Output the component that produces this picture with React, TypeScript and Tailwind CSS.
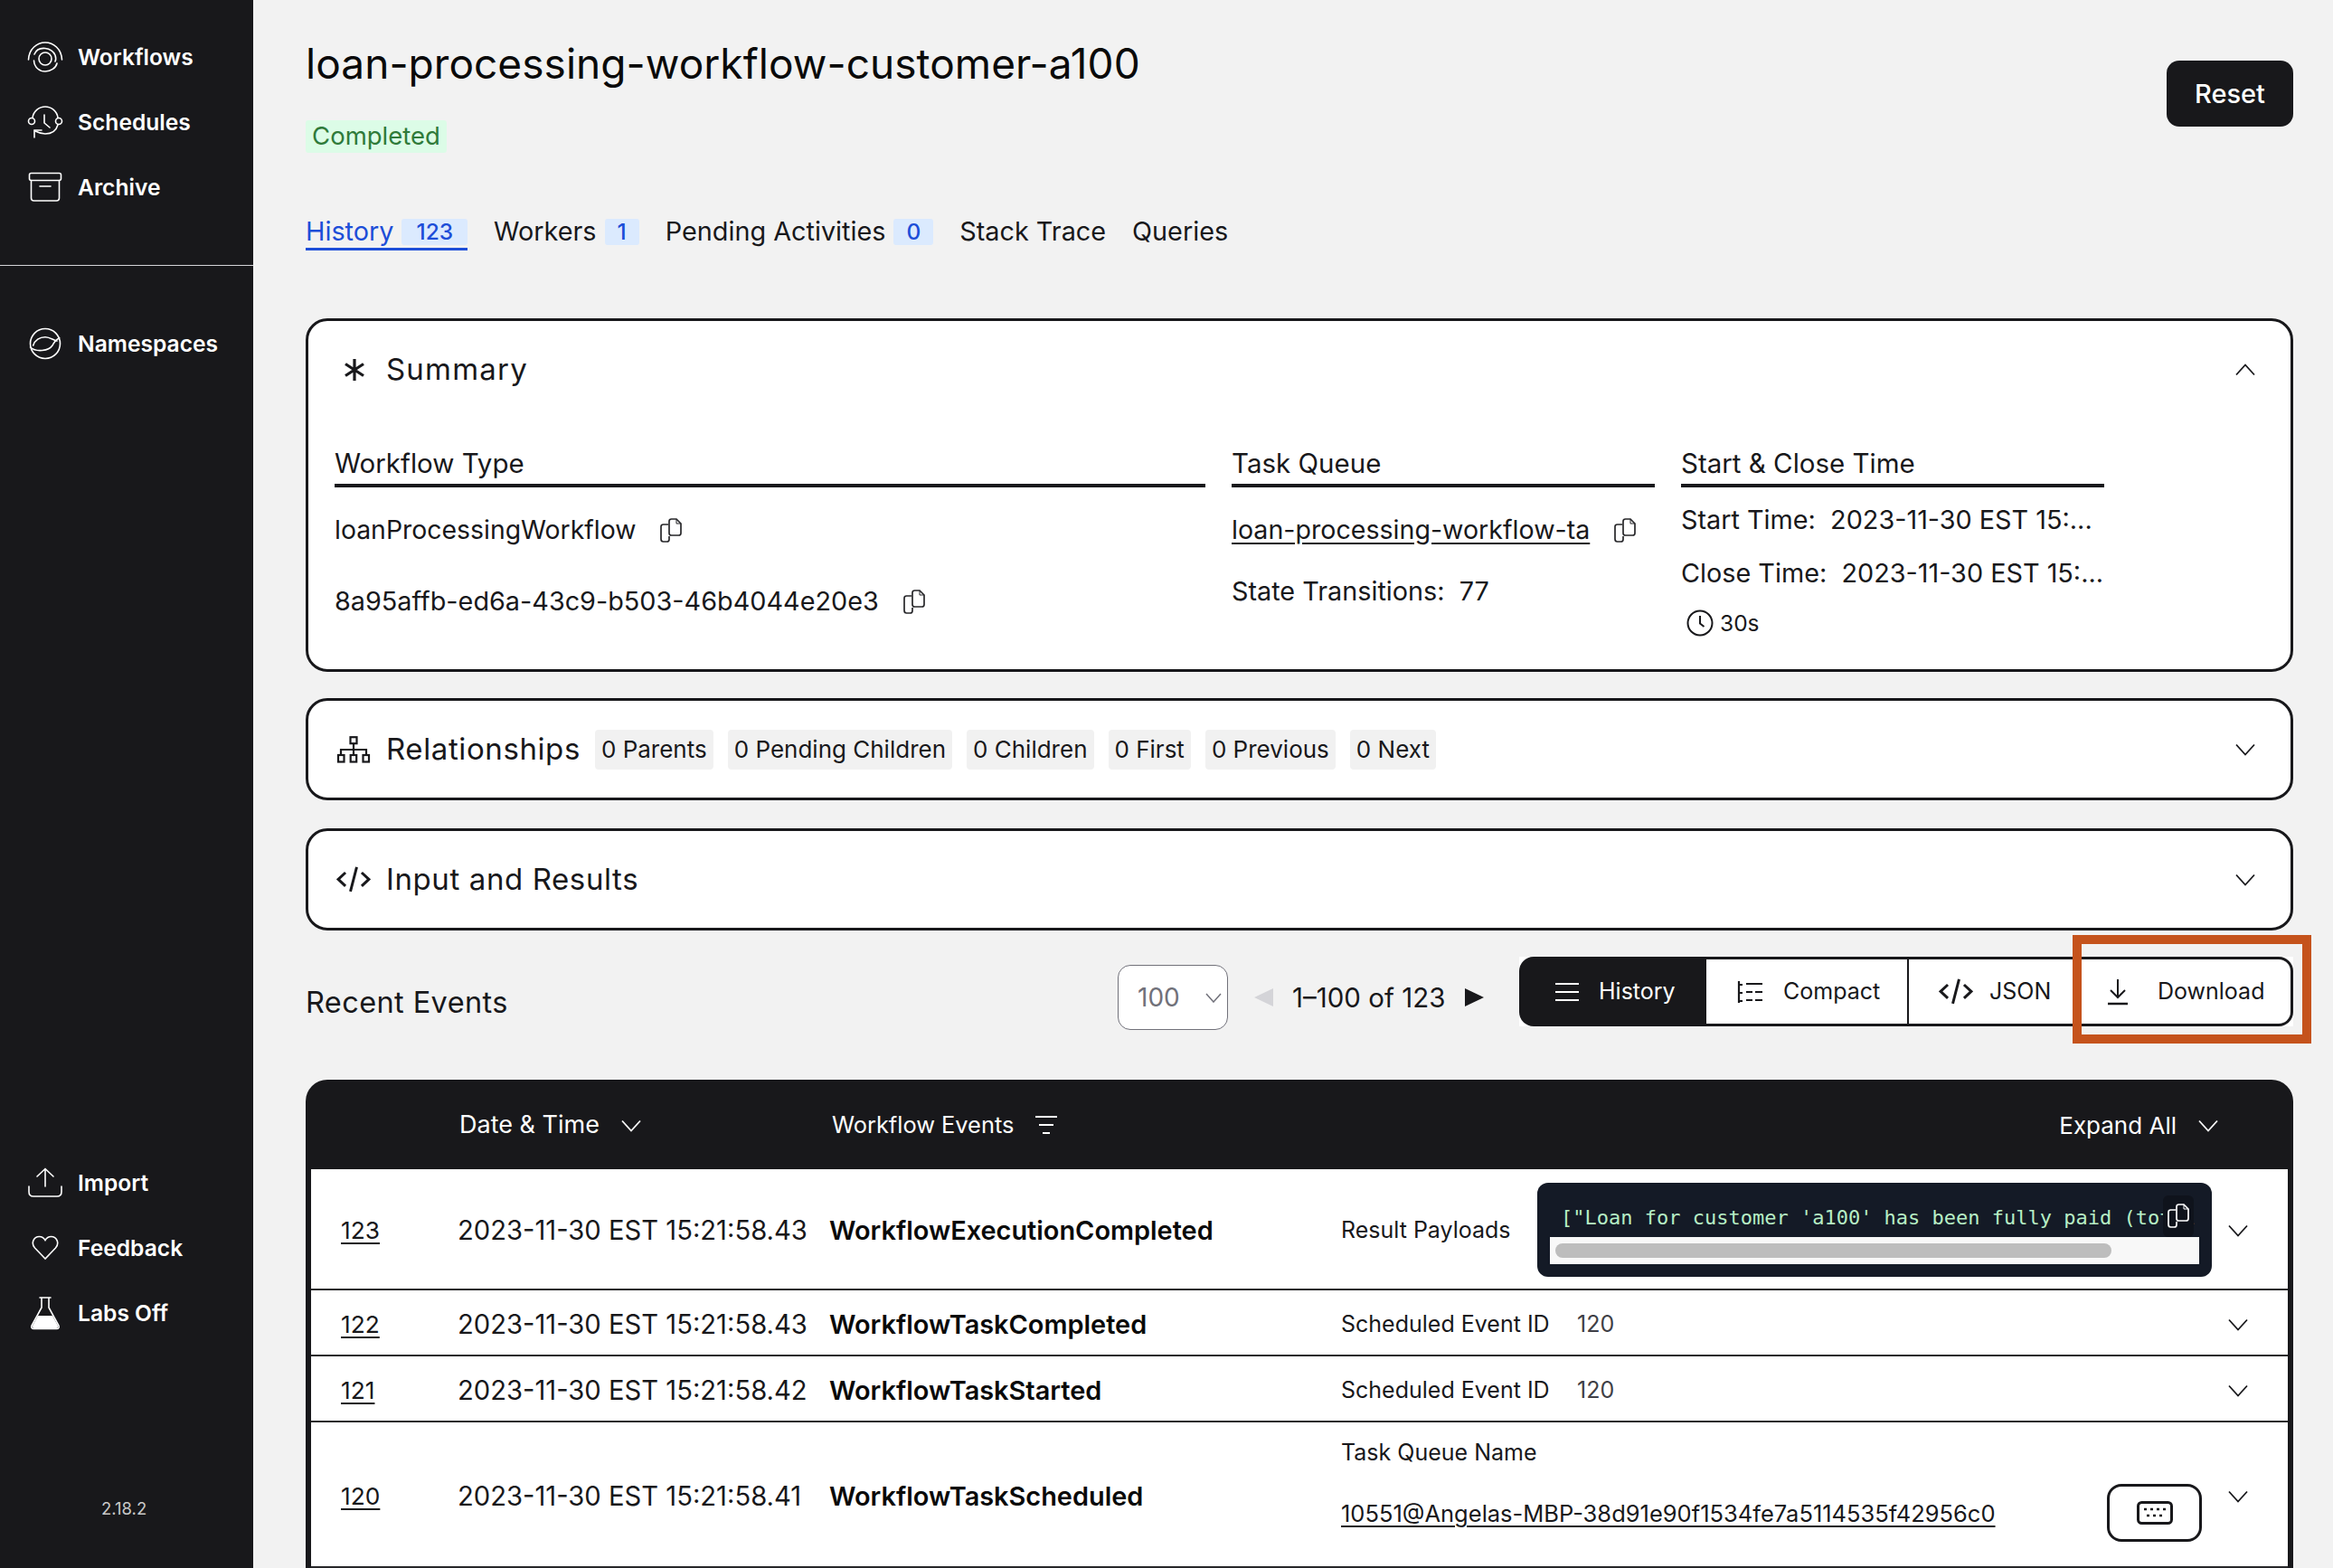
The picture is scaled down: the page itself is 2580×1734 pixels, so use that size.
import React from "react";

const F = "font-['Inter',sans-serif]";

const Chev = ({ up = false, cls = "text-[#18181b]" }: { up?: boolean; cls?: string }) => (
  <svg width="24" height="14" viewBox="0 0 24 14" fill="none" className={cls + " shrink-0"}>
    <path d={up ? "M2 12.5 12 1.5l10 11" : "M2 1.5 12 12.5 22 1.5"} stroke="currentColor" strokeWidth="1.8" />
  </svg>
);

const Copy = ({ cls = "text-[#27272a]" }: { cls?: string }) => (
  <svg width="28" height="29" viewBox="0 0 28 29" fill="none" className={cls + " shrink-0"} stroke="currentColor" strokeWidth="1.7">
    <path d="M11 8H5.500Q3 8 3 10.500V24Q3 27 5.500 27H9.500Q12 27 12 24.500V21" />
    <path d="M12 4.500Q12 2 14.500 2H20L25 7V17.500Q25 20 22.500 20H14.500Q12 20 12 17.500Z" />
    <path d="M20 2V7H25" strokeWidth="1" />
  </svg>
);

const Code = ({ w = 38 }: { w?: number }) => (
  <svg width={w} height={w * 0.76} viewBox="0 0 38 29" fill="none" stroke="#18181b" strokeWidth="3" className="shrink-0">
    <path d="M10 7 2 14.500 10 22M28 7 36 14.500 28 22M22.500 1 15.500 28" />
  </svg>
);

const Nav = ({ icon, label }: { icon: React.ReactNode; label: string }) => (
  <div className="flex h-[72px] items-center">
    <div className="flex w-[86px] shrink-0 justify-center pl-[14px]">{icon}</div>
    <span className="text-[24.6px] font-semibold text-white">{label}</span>
  </div>
);

const s = { fill: "none", stroke: "#fff", strokeWidth: 1.6, strokeLinecap: "round" as const };

const WorkflowsIcon = () => (
  <svg width="40" height="36" viewBox="0 0 40 36">
    <path {...s} d="M1.500 21C2 9 11 2 20 2s18 7 18.500 19" />
    <path {...s} d="M8 15C10 10 15 8 20 8.500c5 .5 9 3 11 7.500 1 3 1 5 0 7" />
    <path {...s} d="M7.500 22C8 30 14 34 20 34s12-4 13-9" />
    <circle {...s} cx="20" cy="20" r="7" />
  </svg>
);
const SchedulesIcon = () => (
  <svg width="40" height="36" viewBox="0 0 40 36">
    <circle {...s} cx="5" cy="17" r="3.500" />
    <circle {...s} cx="35" cy="17" r="3.500" />
    <path {...s} d="M6 13C7 6 13 1 20 1s13 5 14 12" />
    <path {...s} d="M19 10v9l6 5" />
    <path {...s} d="M34 21C32 28 27 31 20 31c-4 0-7-1-11-3" />
    <path {...s} d="M8 35V27h8" />
  </svg>
);
const ArchiveIcon = () => (
  <svg width="38" height="34" viewBox="0 0 38 34">
    <rect {...s} x="1.500" y="1.500" width="35" height="8" rx="2" />
    <path {...s} d="M3.500 9.500V29q0 3 3 3h25q3 0 3-3V9.500" />
    <path {...s} d="M13 16h12" />
  </svg>
);
const NamespacesIcon = () => (
  <svg width="36" height="36" viewBox="0 0 36 36">
    <circle {...s} cx="18" cy="18" r="16.500" />
    <path {...s} d="M4.700 20C6.500 14 12 10.700 18 10.700 23 10.700 27 14 31 15" />
    <path {...s} d="M1.500 22C5 25 10 26 14.700 25.500 20 25 24 23 26 20 28 16 31 13 33.700 11.700" />
  </svg>
);
const ImportIcon = () => (
  <svg width="40" height="34" viewBox="0 0 40 34">
    <path {...s} d="M20 21V2M11 10l9-8.500L29 10" />
    <path {...s} d="M2 21v6q0 5 5 5h26q5 0 5-5v-6" />
  </svg>
);
const HeartIcon = () => (
  <svg width="30" height="28" viewBox="0 0 30 28">
    <path {...s} d="M15 26 3.500 14C-1 9 2 1.500 8.500 1.500 11.500 1.500 13.500 3 15 5.500 16.500 3 18.500 1.500 21.500 1.500 28 1.500 31 9 26.500 14Z" />
  </svg>
);
const FlaskIcon = () => (
  <svg width="34" height="38" viewBox="0 0 34 38">
    <path d="M9 22h16l6 11q1 3-2 3H5q-3 0-2-3Z" fill="#fff" />
    <path {...s} d="M11 2h12M13 2v11L2 33q-1 3.500 2.500 3.500h25Q33 36.500 32 33L21 13V2" />
  </svg>
);

const Tab = ({ label, n, active }: { label: string; n?: string; active?: boolean }) => (
  <div className={"flex h-[39px] items-center gap-[9px] " + (active ? "border-b-[3px] border-[#1d4ed8] text-[#1d4ed8]" : "border-b-[3px] border-transparent text-[#18181b]")}>
    <span className="text-[28.8px] leading-none">{label}</span>
    {n && (
      <span className={"flex h-[29px] items-center rounded-[3px] bg-[#dbeafe] text-[24.5px] font-medium text-[#1d4ed8] " + (active ? "px-[16px]" : "px-[14px]")}>{n}</span>
    )}
  </div>
);

const ColHead = ({ t }: { t: string }) => (
  <div className="border-b-[4px] border-[#18181b] pb-[4px] text-[29.500px] leading-[38px] text-[#18181b]">{t}</div>
);

const Pill = ({ t }: { t: string }) => (
  <span className="flex h-[44px] items-center rounded-[4px] bg-[#f1f1f1] px-[7px] text-[26px] text-[#18181b]">{t}</span>
);

const Row = ({ id, date, ev, h, children }: { id: string; date: string; ev: string; h: string; children: React.ReactNode }) => (
  <div className={"flex items-center border-b-2 border-[#27272a] pt-[4px] text-[26.3px] text-[#18181b] " + h}>
    <div className="w-[162px] shrink-0 pl-[33px]"><span className="underline underline-offset-4">{id}</span></div>
    <div className="w-[411px] shrink-0 text-[29.2px] whitespace-nowrap">{date}</div>
    <div className="w-[566px] shrink-0 text-[28.9px] font-semibold whitespace-nowrap text-[#0a0a0a]">{ev}</div>
    <div className="flex min-w-0 flex-1 items-center text-[25px]">{children}</div>
    <div className="w-[90px] shrink-0 pl-[23px]"><Chev /></div>
  </div>
);

export default function App() {
  return (
    <div className={"flex h-screen w-full overflow-hidden bg-[#f2f2f2] " + F}>
      <aside className="flex h-full w-[280px] shrink-0 flex-col bg-[#18181b]">
        <div className="pt-[27px]">
          <Nav icon={<WorkflowsIcon />} label="Workflows" />
          <Nav icon={<SchedulesIcon />} label="Schedules" />
          <Nav icon={<ArchiveIcon />} label="Archive" />
        </div>
        <div className="mt-[50px] h-px bg-[#d4d4d8]" />
        <div className="mt-[50px]">
          <Nav icon={<NamespacesIcon />} label="Namespaces" />
        </div>
        <div className="mt-[856px]">
          <Nav icon={<ImportIcon />} label="Import" />
          <Nav icon={<HeartIcon />} label="Feedback" />
          <Nav icon={<FlaskIcon />} label="Labs Off" />
        </div>
        <div className="mt-[167px] pl-[112px] text-[18.5px] text-[#c8c8c8]">2.18.2</div>
      </aside>

      <main className="min-w-0 flex-1 pl-[58px] pr-[44px]">
        <div className="flex items-start justify-between">
          <div>
            <h1 className="mt-[34px] h-[72px] text-[46px] leading-[72px] tracking-[0.05px] whitespace-nowrap text-[#0a0a0a]">loan-processing-workflow-customer-a100</h1>
            <div className="mt-[27px] flex h-[36px] w-[156px] items-center justify-center rounded-[3px] bg-[#dcfce7] text-[27.500px] text-[#2f7a3a]">Completed</div>
          </div>
          <button className="mt-[67px] h-[73px] w-[140px] rounded-[14px] bg-[#18181b] text-[29px] font-medium text-white">Reset</button>
        </div>

        <div className="mt-[69px] flex gap-[29px]">
          <Tab label="History" n="123" active />
          <Tab label="Workers" n="1" />
          <Tab label="Pending Activities" n="0" />
          <Tab label="Stack Trace" />
          <Tab label="Queries" />
        </div>

        <section className="mt-[75px] h-[391px] rounded-[24px] border-[3px] border-[#18181b] bg-white pl-[29px] pr-[38px]">
          <div className="flex h-[107px] items-center justify-between">
            <div className="flex items-center">
              <svg width="26" height="26" viewBox="0 0 26 26" stroke="#18181b" strokeWidth="3.200" className="ml-[9px] mr-[22px]">
                <path d="M13 1v24M3 6.500l20 13M23 6.500l-20 13" />
              </svg>
              <span className="text-[33px] tracking-[1.2px] text-[#18181b]">Summary</span>
            </div>
            <Chev up />
          </div>
          <div className="mt-[31px] flex gap-[29px]">
            <div className="w-[963px] shrink-0">
              <ColHead t="Workflow Type" />
              <div className="mt-[25px] flex h-[44px] items-center gap-[25px] text-[28.4px] text-[#18181b]">loanProcessingWorkflow <Copy /></div>
              <div className="mt-[35px] flex h-[44px] items-center gap-[25px] text-[28.800px] text-[#18181b]">8a95affb-ed6a-43c9-b503-46b4044e20e3 <Copy /></div>
            </div>
            <div className="w-[468px] shrink-0">
              <ColHead t="Task Queue" />
              <div className="mt-[25px] flex h-[44px] items-center gap-[25px] text-[28.6px] text-[#18181b]"><span className="underline underline-offset-4">loan-processing-workflow-ta</span> <Copy /></div>
              <div className="mt-[24px] flex h-[44px] items-center text-[28.8px] text-[#18181b]">State Transitions:&nbsp; 77</div>
            </div>
            <div className="w-[468px] shrink-0">
              <ColHead t="Start &amp; Close Time" />
              <div className="mt-[14px] flex h-[44px] items-center text-[28.8px] whitespace-nowrap text-[#18181b]">Start Time:&nbsp; 2023-11-30 EST 15:...</div>
              <div className="mt-[15px] flex h-[44px] items-center text-[28.8px] whitespace-nowrap text-[#18181b]">Close Time:&nbsp; 2023-11-30 EST 15:...</div>
              <div className="mt-[11px] flex h-[44px] items-center gap-[7px] pl-[6px] text-[24.5px] text-[#18181b]">
                <svg width="30" height="30" viewBox="0 0 30 30" fill="none" stroke="#18181b" strokeWidth="2"><circle cx="15" cy="15" r="13.500" /><path d="M15 7v8.500l4.500 3.500" /></svg>
                30s
              </div>
            </div>
          </div>
        </section>

        <section className="mt-[29px] flex h-[113px] items-center justify-between rounded-[24px] border-[3px] border-[#18181b] bg-white pl-[31px] pr-[38px]">
          <div className="flex items-center">
            <svg width="38" height="30" viewBox="0 0 38 30" fill="none" stroke="#18181b" strokeWidth="2.200" className="mr-[17px]">
              <rect x="15.500" y="1.200" width="7" height="7" />
              <path d="M19 8v7M5 20v-5h28v5M19 15v5" />
              <rect x="2" y="21" width="6.500" height="7.500" />
              <rect x="15.700" y="21" width="6.500" height="7.500" />
              <rect x="29.500" y="21" width="6.500" height="7.500" />
            </svg>
            <span className="mr-[16px] text-[33px] tracking-[0.6px] text-[#18181b]">Relationships</span>
            <div className="flex gap-[16px]">
              <Pill t="0 Parents" />
              <Pill t="0 Pending Children" />
              <Pill t="0 Children" />
              <Pill t="0 First" />
              <Pill t="0 Previous" />
              <Pill t="0 Next" />
            </div>
          </div>
          <Chev />
        </section>

        <section className="mt-[31px] flex h-[113px] items-center justify-between rounded-[24px] border-[3px] border-[#18181b] bg-white pl-[31px] pr-[38px]">
          <div className="flex items-center gap-[17px]">
            <Code />
            <span className="text-[33px] tracking-[0.6px] text-[#18181b]">Input and Results</span>
          </div>
          <Chev />
        </section>

        <div className="mt-[29px] flex h-[82px] items-start">
          <div className="mt-[31px] w-[898px] text-[32.500px] leading-[40px] tracking-[0.4px] text-[#18181b]">Recent Events</div>
          <div className="mt-[9px] flex h-[72px] w-[122px] items-center justify-between rounded-[14px] border-[1.500px] border-[#71717a] bg-white pl-[21px] pr-[6px] text-[28px] text-[#71717a]">
            100
            <svg width="18" height="11" viewBox="0 0 18 11" fill="none" stroke="#71717a" strokeWidth="1.500"><path d="M1 1l8 9 8-9" /></svg>
          </div>
          <div className="mt-[9px] flex h-[72px] w-[322px] items-center pl-[29px] text-[29.500px] text-[#18181b]">
            <svg width="22" height="20" viewBox="0 0 22 20" className="mr-[20px]"><path d="M21 0v20L0 10Z" fill="#d4d4d8" /></svg>
            <span className="whitespace-nowrap">1–100 of 123</span>
            <svg width="22" height="20" viewBox="0 0 22 20" className="ml-[22px]"><path d="M0 0v20l21-10Z" fill="#18181b" /></svg>
          </div>
          <div className="flex h-[77px] w-[856px] bg-white text-[25px] text-[#18181b]">
            <div className="flex w-[207px] items-center gap-[21px] rounded-l-[16px] bg-[#18181b] pl-[39px] text-white">
              <svg width="28" height="24" viewBox="0 0 28 24" stroke="#fff" strokeWidth="2"><path d="M1 3h26M1 12h26M1 21h26" /></svg>
              History
            </div>
            <div className="flex w-[224px] items-center gap-[22px] border-y-[3px] border-r-2 border-[#18181b] bg-white pl-[33px]">
              <svg width="30" height="26" viewBox="0 0 30 26" fill="none" stroke="#18181b" strokeWidth="2.200">
                <path d="M3 1v24M3 5h4M3 14h4M3 23h4" />
                <path d="M11 4h18M11 13h7M21 13h8M11 22h7M21 22h8" />
              </svg>
              Compact
            </div>
            <div className="flex w-[182px] items-center gap-[18px] border-y-[3px] border-[#18181b] bg-white pl-[33px]">
              <Code />
              JSON
            </div>
            <div className="relative flex w-[243px] items-center gap-[32px] rounded-r-[16px] border-y-[3px] border-r-[3px] border-[#18181b] bg-white pl-[37px]">
              <svg width="24" height="30" viewBox="0 0 24 30" fill="none" stroke="#18181b" strokeWidth="2"><path d="M12 1v20M4 13l8 8 8-8" /><path d="M1 28h22" strokeWidth="2.500" /></svg>
              Download
              <div className="absolute top-[-27px] right-[-23px] bottom-[-22px] left-[-1px] border-[10px] border-[#c5531c]" />
            </div>
          </div>
        </div>

        <div className="mt-[54px] rounded-t-[24px] bg-[#18181b] px-[6px]">
          <div className="flex h-[99px] items-center pt-[2px] text-white">
            <div className="flex w-[576px] shrink-0 items-center gap-[23px] pl-[164px] text-[27px]">Date &amp; Time <Chev cls="text-white" /></div>
            <div className="flex items-center gap-[24px] text-[25.4px]">
              Workflow Events
              <svg width="24" height="24" viewBox="0 0 24 24" stroke="#fff" strokeWidth="2"><path d="M0 3h24M4 12h16M8 21h8" /></svg>
            </div>
            <div className="ml-auto flex items-center gap-[23px] pr-[76px] text-[26px]">Expand All <Chev cls="text-white" /></div>
          </div>
          <div className="bg-white">
            <Row id="123" date="2023-11-30 EST 15:21:58.43" ev="WorkflowExecutionCompleted" h="h-[134px]">
              <span className="w-[217px] shrink-0 whitespace-nowrap">Result Payloads</span>
              <div className="relative -mt-[3px] flex h-[104px] w-[746px] shrink-0 flex-col rounded-[12px] bg-[#141a26] px-[14px] pt-[18px]">
                <div className="h-[42px] overflow-hidden pl-[12px] pt-[5px] font-['DejaVu_Sans_Mono',monospace] text-[22px] leading-[32px] whitespace-nowrap text-[#b7efc5]">["Loan for customer 'a100' has been fully paid (total:</div>
                <div className="flex h-[30px] items-center bg-[#f8f8f8] px-[6px]">
                  <div className="h-[16px] w-[615px] rounded-full bg-[#bdbdbd]" />
                </div>
                <div className="absolute top-[14px] right-[20px] flex h-[46px] w-[34px] items-center justify-center rounded-[6px] bg-[#0f131c]"><Copy cls="text-white" /></div>
              </div>
            </Row>
            <Row id="122" date="2023-11-30 EST 15:21:58.43" ev="WorkflowTaskCompleted" h="h-[73px]">
              <span className="w-[261px] shrink-0 whitespace-nowrap">Scheduled Event ID</span>
              <span className="text-[#3f3f46]">120</span>
            </Row>
            <Row id="121" date="2023-11-30 EST 15:21:58.42" ev="WorkflowTaskStarted" h="h-[73px]">
              <span className="w-[261px] shrink-0 whitespace-nowrap">Scheduled Event ID</span>
              <span className="text-[#3f3f46]">120</span>
            </Row>
            <Row id="120" date="2023-11-30 EST 15:21:58.41" ev="WorkflowTaskScheduled" h="h-[161px]">
              <div className="flex w-full items-center justify-between pr-[5px]">
                <div className="flex flex-col gap-[30px] pb-[28px] text-[25.500px]">
                  <span className="text-[25px] whitespace-nowrap">Task Queue Name</span>
                  <span className="whitespace-nowrap underline underline-offset-4">10551@Angelas-MBP-38d91e90f1534fe7a5114535f42956c0</span>
                </div>
                <div className="mt-[36px] flex h-[64px] w-[105px] items-center justify-center rounded-[16px] border-[3px] border-[#18181b]">
                  <svg width="40" height="26" viewBox="0 0 40 26"><rect x="1.500" y="1.500" width="37" height="23" rx="4" fill="#fff" stroke="#18181b" strokeWidth="3" /><path d="M8 9h3M15 9h3M22 9h3M29 9h3M11 16h3M18 16h3M25 16h3" stroke="#18181b" strokeWidth="2.500" /></svg>
                </div>
              </div>
            </Row>
            <div className="h-[60px]" />
          </div>
        </div>
      </main>
    </div>
  );
}
